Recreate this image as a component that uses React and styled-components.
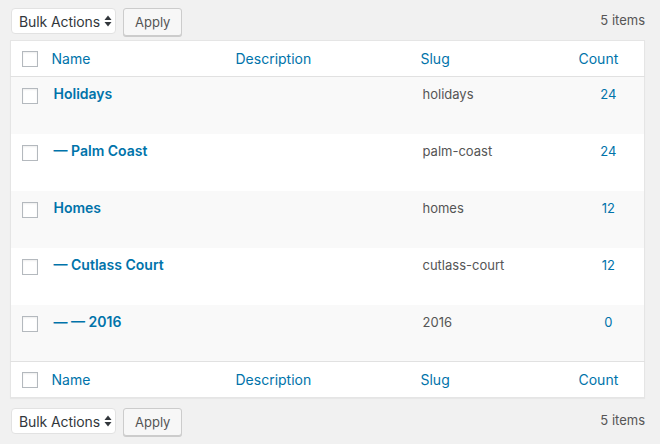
import React from "react";
import styled, { createGlobalStyle } from "styled-components";

const GlobalStyle = createGlobalStyle`
  body {
    margin: 0;
    background: #f1f1f1;
    font-family: Inter, "Noto Sans", sans-serif;
    color: #444;
  }
`;

const terms = [
  { name: "Holidays", depth: 0, slug: "holidays", count: 24 },
  { name: "Palm Coast", depth: 1, slug: "palm-coast", count: 24 },
  { name: "Homes", depth: 0, slug: "homes", count: 12 },
  { name: "Cutlass Court", depth: 1, slug: "cutlass-court", count: 12 },
  { name: "2016", depth: 2, slug: "2016", count: 0 },
];

const Page = styled.div`
  padding: 8px 15px 8px 10px;
`;

const TableNav = styled.div`
  display: flex;
  align-items: center;
  height: 28px;
  margin: ${(p) => (p.bottom ? "10px 0 0" : "0 0 4px")};
`;

const SelectWrap = styled.div`
  position: relative;
  margin-left: 1px;
  margin-top: -2px;
`;

const Select = styled.select`
  appearance: none;
  -webkit-appearance: none;
  height: 26px;
  width: 105px;
  padding: 0 10px 0 7px;
  background: #fff;
  border: 1px solid #e2e2e2;
  border-radius: 4px;
  font-family: inherit;
  font-size: 14px;
  letter-spacing: -0.1px;
  color: #32373c;
  outline: none;
`;

const Arrows = styled.svg`
  position: absolute;
  right: 4px;
  top: 7px;
  pointer-events: none;
`;

const Button = styled.button`
  height: 28px;
  margin-left: 7px;
  padding: 0 11px;
  background: #f7f7f7;
  border: 1px solid #ccc;
  border-radius: 3px;
  box-shadow: 0 1px 0 #ccc;
  color: #555;
  font-family: inherit;
  font-size: 13px;
`;

const Count = styled.span`
  margin-left: auto;
  font-size: 13px;
  color: #555;
  margin-top: -4px;
`;

const Table = styled.table`
  width: 100%;
  border-collapse: collapse;
  border-spacing: 0;
  background: #fff;
  border: 1px solid #e5e5e5;
  box-shadow: 0 1px 1px rgba(0, 0, 0, 0.04);
  table-layout: fixed;
`;

const HeadCell = styled.th`
  height: 36px;
  box-sizing: border-box;
  padding: 0 ${(p) => (p.pad ? p.pad : 10)}px;
  text-align: left;
  font-weight: 400;
  font-size: 14px;
  color: #0073aa;
  border-${(p) => (p.foot ? "top" : "bottom")}: 1px solid #e1e1e1;
  vertical-align: middle;
`;

const Row = styled.tr`
  background: ${(p) => (p.alt ? "#f9f9f9" : "#fff")};
`;

const Cell = styled.td`
  height: 57px;
  box-sizing: border-box;
  padding: 8px 10px 0 12px;
  vertical-align: top;
  font-size: 13px;
  color: #555;
  text-align: ${(p) => (p.center ? "center" : "left")};
`;

const CheckCell = styled.td`
  height: ${(p) => (p.head ? 36 : 57)}px;
  box-sizing: border-box;
  padding: ${(p) => (p.head ? 0 : 11)}px 0 0 11px;
  vertical-align: ${(p) => (p.head ? "middle" : "top")};
  border-${(p) => (p.foot ? "top" : "bottom")}: ${(p) => (p.head ? "1px solid #e1e1e1" : "0")};
`;

const Check = styled.span`
  display: block;
  width: 16px;
  height: 16px;
  box-sizing: border-box;
  border: 1px solid #b4b9be;
  background: #fff;
  box-shadow: inset 0 1px 2px rgba(0, 0, 0, 0.07);
`;

const TermName = styled.a`
  display: block;
  font-weight: 600;
  font-size: 14px;
  line-height: 18px;
  color: #0073aa;
  text-decoration: none;
`;

const NumLink = styled.a`
  display: inline-block;
  line-height: 18px;
  color: #0073aa;
  text-decoration: none;
`;

const Slug = styled.span`
  display: block;
  line-height: 18px;
`;

const Nav = ({ bottom }) => (
  <TableNav bottom={bottom}>
    <SelectWrap>
      <Select defaultValue="-1">
        <option value="-1">Bulk Actions</option>
        <option value="delete">Delete</option>
      </Select>
      <Arrows width="8" height="12" viewBox="0 0 8 12">
        <path d="M4 0.5L7.5 5H0.5Z" fill="#32373c" />
        <path d="M4 11.5L7.5 7H0.5Z" fill="#32373c" />
      </Arrows>
    </SelectWrap>
    <Button>Apply</Button>
    <Count>5 items</Count>
  </TableNav>
);

const Header = ({ foot }) => (
  <tr>
    <CheckCell as="td" head foot={foot}>
      <Check />
    </CheckCell>
    <HeadCell foot={foot}>Name</HeadCell>
    <HeadCell foot={foot}>Description</HeadCell>
    <HeadCell foot={foot}>Slug</HeadCell>
    <HeadCell foot={foot} pad={8}>Count</HeadCell>
  </tr>
);

export default function App() {
  return (
    <Page>
      <GlobalStyle />
      <Nav />
      <Table>
        <colgroup>
          <col style={{ width: 31 }} />
          <col style={{ width: 184 }} />
          <col style={{ width: 185 }} />
          <col style={{ width: 160 }} />
          <col />
        </colgroup>
        <thead>
          <Header />
        </thead>
        <tbody>
          {terms.map((t, i) => (
            <Row key={t.slug} alt={i % 2 === 0}>
              <CheckCell>
                <Check />
              </CheckCell>
              <Cell>
                <TermName href="#">
                  {"— ".repeat(t.depth)}
                  {t.name}
                </TermName>
              </Cell>
              <Cell />
              <Cell>
                <Slug>{t.slug}</Slug>
              </Cell>
              <Cell center>
                <NumLink href="#">{t.count}</NumLink>
              </Cell>
            </Row>
          ))}
        </tbody>
        <tfoot>
          <Header foot />
        </tfoot>
      </Table>
      <Nav bottom />
    </Page>
  );
}
